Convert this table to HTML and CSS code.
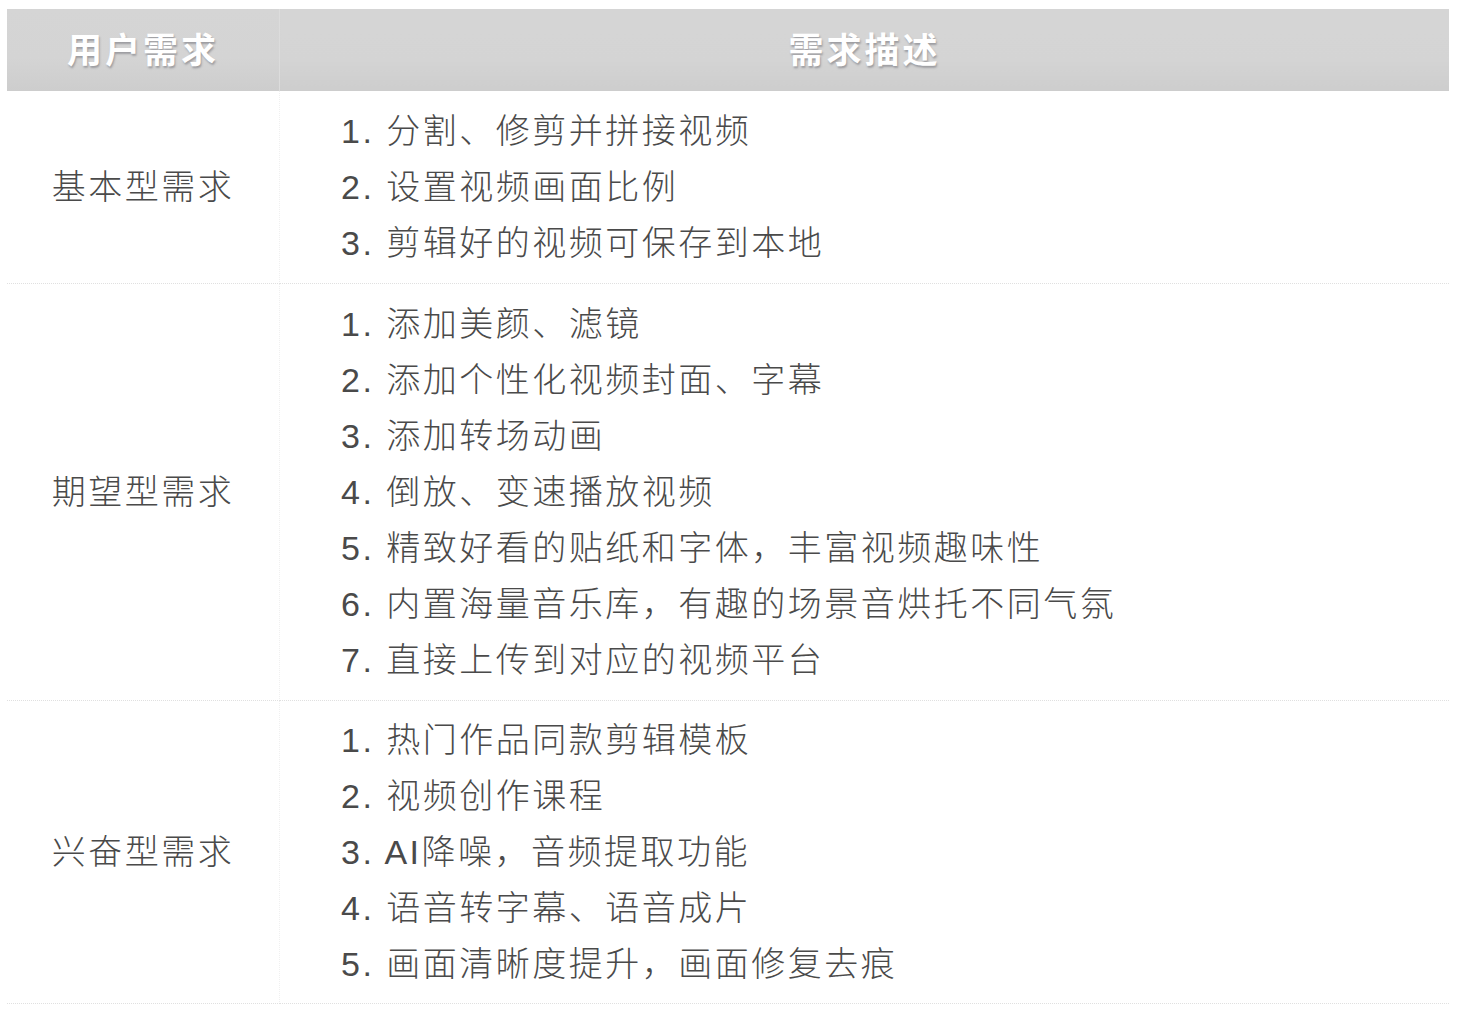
FILE: index.html
```
<!DOCTYPE html>
<html lang="zh-CN">
<head>
<meta charset="utf-8">
<link rel="stylesheet" href="styles.css">
</head>
<body>
<table class="req">
  <thead>
    <tr><th class="c1">用户需求</th><th class="c2">需求描述</th></tr>
  </thead>
  <tbody>
    <tr>
      <td class="c1">基本型需求</td>
      <td class="c2">
        <div class="ln">1. 分割、修剪并拼接视频</div>
        <div class="ln">2. 设置视频画面比例</div>
        <div class="ln">3. 剪辑好的视频可保存到本地</div>
      </td>
    </tr>
    <tr>
      <td class="c1">期望型需求</td>
      <td class="c2">
        <div class="ln">1. 添加美颜、滤镜</div>
        <div class="ln">2. 添加个性化视频封面、字幕</div>
        <div class="ln">3. 添加转场动画</div>
        <div class="ln">4. 倒放、变速播放视频</div>
        <div class="ln">5. 精致好看的贴纸和字体，丰富视频趣味性</div>
        <div class="ln">6. 内置海量音乐库，有趣的场景音烘托不同气氛</div>
        <div class="ln">7. 直接上传到对应的视频平台</div>
      </td>
    </tr>
    <tr class="last">
      <td class="c1">兴奋型需求</td>
      <td class="c2">
        <div class="ln">1. 热门作品同款剪辑模板</div>
        <div class="ln">2. 视频创作课程</div>
        <div class="ln">3. AI降噪，音频提取功能</div>
        <div class="ln">4. 语音转字幕、语音成片</div>
        <div class="ln">5. 画面清晰度提升，画面修复去痕</div>
      </td>
    </tr>
  </tbody>
</table>
</body>
</html>
```
FILE: styles.css
```
html, body {
  margin: 0;
  padding: 0;
  background: #ffffff;
}
body {
  padding: 9px 8px 0 7px;
  font-family: "Liberation Sans", "Noto Sans CJK SC", sans-serif;
}
.req {
  width: 1442px;
  border-collapse: collapse;
  table-layout: fixed;
}
.req th {
  height: 76px;
  padding: 0 0 6px 0;
  background: linear-gradient(#d5d5d5 0%, #d4d4d4 60%, #cdcdcd 100%);
  color: #ffffff;
  font-size: 35px;
  font-weight: 700;
  letter-spacing: 3px;
  text-align: center;
  text-shadow: 1px 2px 2px rgba(90, 90, 100, 0.45);
}
.req th.c1 {
  width: 272px;
  border-right: 1px solid #dcdcdc;
}
.req td {
  padding: 12px 0 12px 0;
  color: #4a4a4a;
  font-size: 34px;
  font-weight: 300;
  letter-spacing: 2.5px;
  line-height: 56px;
  vertical-align: middle;
  border-bottom: 1px dotted #e0e0e0;
}
.req .last td {
  padding-top: 11px;
  padding-bottom: 11px;
}
.req td.c1 {
  text-align: center;
  border-right: 1px dotted #f0f0f0;
}
.req td.c2 {
  padding-left: 61px;
}
.ln {
  white-space: nowrap;
}
```
